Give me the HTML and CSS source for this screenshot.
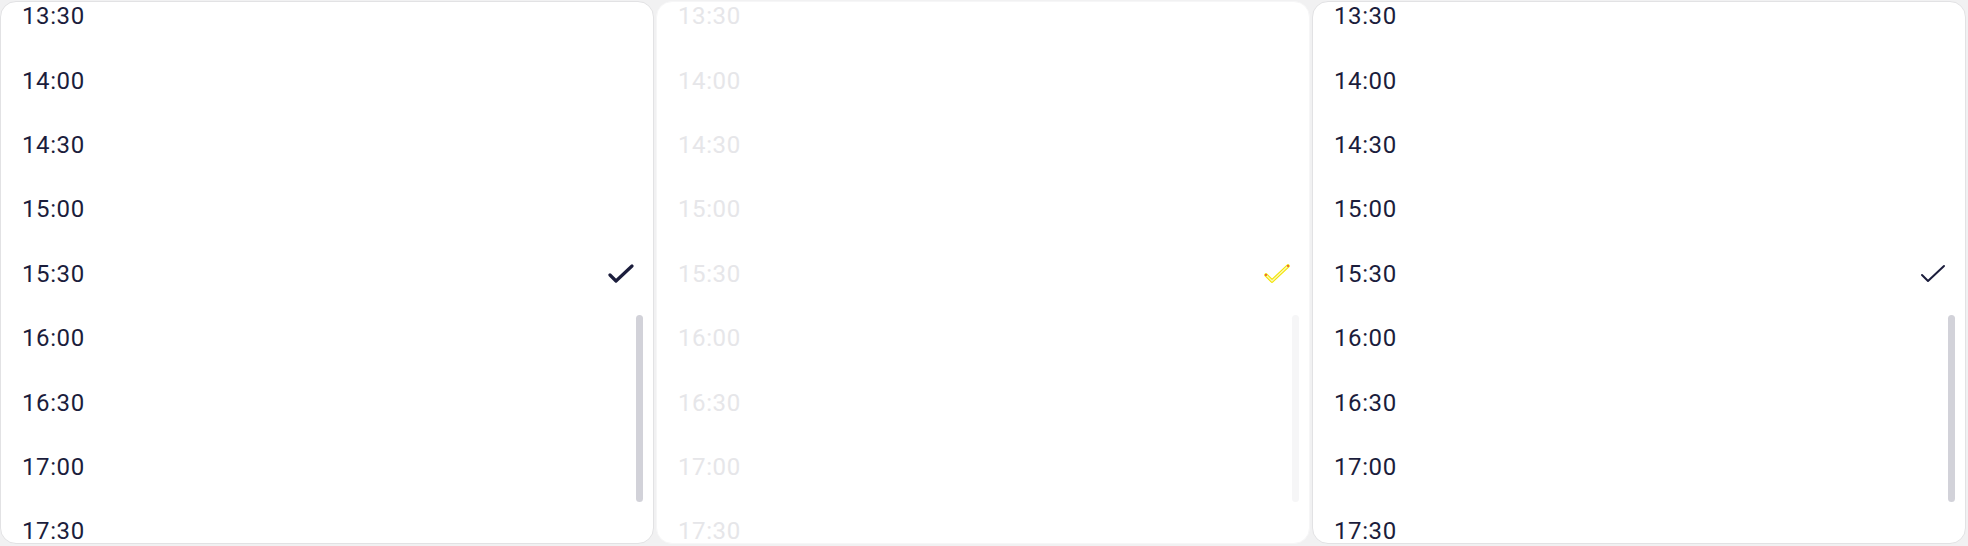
FILE: index.html
```html
<!DOCTYPE html>
<html>
<head>
<meta charset="utf-8">
<link rel="stylesheet" href="styles.css">
</head>
<body>
<div class="board">
  <div class="panel">
    <ul class="list">
      <li class="row">13:30</li>
      <li class="row">14:00</li>
      <li class="row">14:30</li>
      <li class="row">15:00</li>
      <li class="row selected">15:30
        <svg class="check check-bold" viewBox="0 0 26 20" width="26" height="20"><polyline points="2,11 8,17 24,2" /></svg>
      </li>
      <li class="row">16:00</li>
      <li class="row">16:30</li>
      <li class="row">17:00</li>
      <li class="row">17:30</li>
    </ul>
    <div class="scrollbar"></div>
  </div>
  <div class="panel faded">
    <ul class="list">
      <li class="row">13:30</li>
      <li class="row">14:00</li>
      <li class="row">14:30</li>
      <li class="row">15:00</li>
      <li class="row selected">15:30
        <svg class="check check-yellow" viewBox="0 0 26 20" width="26" height="20"><polyline class="outer" points="2,11 8,17 24,2" /><polyline class="inner" points="2,11 8,17 24,2" /><circle class="dot" cx="2" cy="11" r="0.9" /><circle class="dot" cx="24" cy="2" r="0.9" /></svg>
      </li>
      <li class="row">16:00</li>
      <li class="row">16:30</li>
      <li class="row">17:00</li>
      <li class="row">17:30</li>
    </ul>
    <div class="scrollbar"></div>
  </div>
  <div class="panel">
    <ul class="list">
      <li class="row">13:30</li>
      <li class="row">14:00</li>
      <li class="row">14:30</li>
      <li class="row">15:00</li>
      <li class="row selected">15:30
        <svg class="check check-thin" viewBox="0 0 26 20" width="26" height="20"><polyline points="2,11 8,17 24,2" /></svg>
      </li>
      <li class="row">16:00</li>
      <li class="row">16:30</li>
      <li class="row">17:00</li>
      <li class="row">17:30</li>
    </ul>
    <div class="scrollbar"></div>
  </div>
</div>
</body>
</html>
```

FILE: styles.css
```css
html, body {
  margin: 0;
  padding: 0;
  background: #f1f1f2;
}
body {
  width: 1968px;
  height: 546px;
  overflow: hidden;
  font-family: Roboto, "Liberation Sans", sans-serif;
}
.board {
  display: grid;
  grid-template-columns: repeat(3, 1fr);
  gap: 2px;
  padding: 1px 2px 2px 0;
  height: 546px;
  box-sizing: border-box;
}
.panel {
  position: relative;
  background: #fff;
  border: 1px solid #e2e2e4;
  border-radius: 16px;
  overflow: hidden;
}
.list {
  list-style: none;
  margin: -18px 0 0 0;
  padding: 0;
}
.row {
  display: flex;
  align-items: center;
  justify-content: space-between;
  height: 64.4px;
  padding: 0 19px 0 21px;
  font-size: 24px;
  color: #1b1d3c;
  letter-spacing: 0.6px;
}
.faded {
  border-color: #f6f6f7;
}
.faded .row {
  color: #e6e6e9;
}
.check {
  display: block;
  fill: none;
  stroke-linecap: round;
  stroke-linejoin: round;
}
.check-bold polyline {
  stroke: #1b1d3c;
  stroke-width: 3.2;
}
.check-thin polyline {
  stroke: #1b1d3c;
  stroke-width: 2;
}
.check-yellow .outer {
  stroke: #f2e400;
  stroke-width: 3.6;
}
.check-yellow .inner {
  stroke: #fcf7b8;
  stroke-width: 1.4;
}
.check-yellow .dot {
  fill: #e8322b;
}
.scrollbar {
  position: absolute;
  right: 10px;
  top: 313px;
  width: 7px;
  height: 187px;
  border-radius: 4px;
  background: #d2d2d9;
}
.faded .scrollbar {
  background: #f6f6f7;
}
```
